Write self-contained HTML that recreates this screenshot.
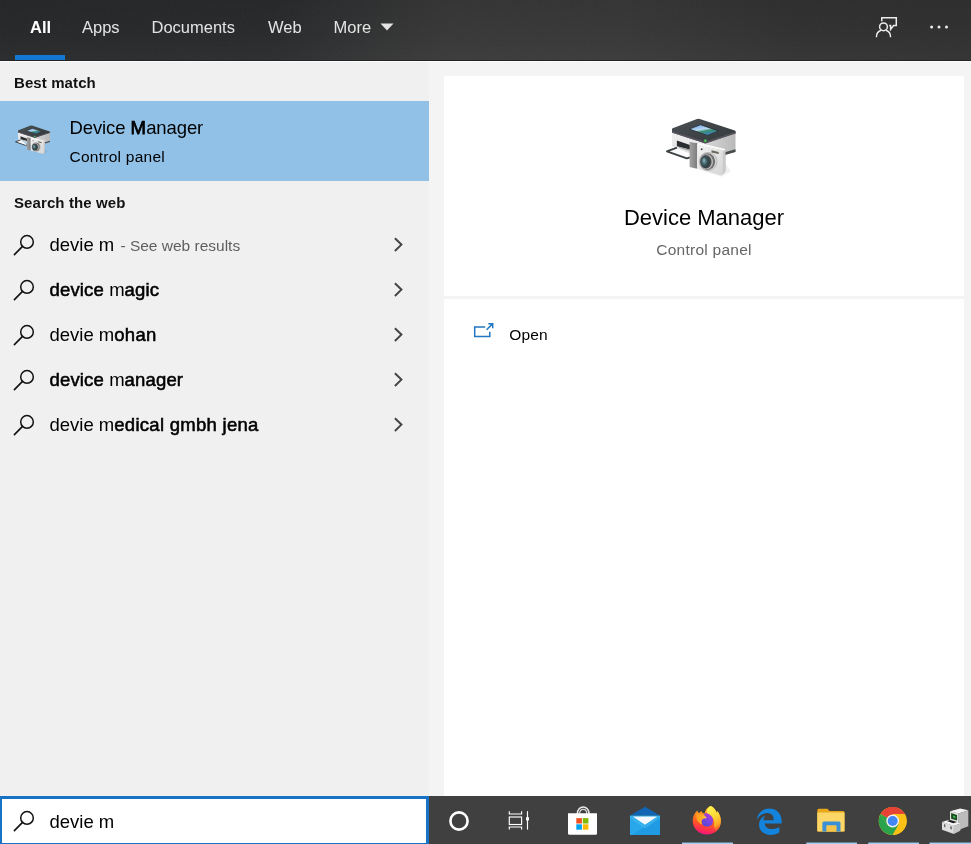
<!DOCTYPE html>
<html lang="en">
<head>
<meta charset="utf-8">
<title>Search</title>
<style>
*{box-sizing:border-box;margin:0;padding:0}
html,body{width:971px;height:844px;overflow:hidden;background:#f4f4f4;font-family:"Liberation Sans",sans-serif;color:#000}
.abs{position:absolute}
#top{left:0;top:0;width:971px;height:61px;background:linear-gradient(90deg,#252628 0%,#27282a 28%,#2e2f30 36%,#363636 46%,#363636 65%,#2f2f2f 82%,#2e2e2e 100%);border-bottom:1px solid #232323}
#top .tab{position:absolute;top:0;height:55px;line-height:55px;font-size:16.5px;color:#e4e4e4;white-space:nowrap}
#top .tab.sel{color:#fff;font-weight:bold}
#uline{left:15px;top:55px;width:50px;height:5px;background:#1278d3}
#left{left:0;top:61px;width:429px;height:735px;background:#f0f0f0}
.hdr{position:absolute;left:14px;font-weight:bold;font-size:15px;letter-spacing:0.1px;color:#111;white-space:nowrap}
#sel{left:0;top:101px;width:429px;height:80px;background:#91c1e7}
.row{position:absolute;left:0;width:429px;height:45px}
.row .t{position:absolute;left:49.5px;top:0px;line-height:45px;font-size:18.5px;white-space:nowrap;color:#000}
.row .t b{font-weight:normal;-webkit-text-stroke:0.55px #000;letter-spacing:0.28px}
.row .t b.n{letter-spacing:0.17px}
.row .t .g{font-size:15.5px;color:#5f5f5f;margin-left:1px}
.row svg.mag{position:absolute;left:12px;top:11px}
.row svg.chev{position:absolute;left:391px;top:13.8px}
#card{left:444px;top:76px;width:520px;height:720px;background:#fff}
#divider{left:444px;top:296px;width:520px;height:3px;background:#f4f4f4}
#task{left:0;top:796px;width:971px;height:48px;background:#404040}
#sbox{left:0;top:796px;width:429px;height:48px;background:#fff;border:3px solid #1873c6;border-left-width:2px;border-bottom-width:1px}
</style>
</head>
<body>
<div id="root" style="position:absolute;left:0;top:0;width:971px;height:844px;will-change:transform">
<div id="top" class="abs">
  <div class="abs" style="left:0;top:0;width:971px;height:60px;background:linear-gradient(180deg,rgba(0,0,0,.07) 0%,rgba(0,0,0,0) 55%,rgba(255,255,255,.025) 100%)"></div>
  <svg class="abs" style="left:0;top:0;opacity:.05" width="971" height="60"><filter id="nz"><feTurbulence type="fractalNoise" baseFrequency="0.9" numOctaves="2" seed="3"/><feColorMatrix type="saturate" values="0"/></filter><rect width="971" height="60" filter="url(#nz)"/></svg>
  <div class="tab sel" style="left:30px">All</div>
  <div class="tab" style="left:82px">Apps</div>
  <div class="tab" style="left:151.5px">Documents</div>
  <div class="tab" style="left:268px">Web</div>
  <div class="tab" style="left:333.5px">More</div>
  <svg class="abs" style="left:380px;top:23px" width="14" height="8" viewBox="0 0 14 8"><path d="M0.5 0.5h13L7 7.5z" fill="#e4e4e4"/></svg>
  <svg class="abs" style="left:870px;top:12px" width="32" height="30" viewBox="870 12 32 30" fill="none" stroke="#ececec" stroke-width="1.5">
    <path d="M881.8 21.3V17.8H896.3V25.6H893.6L890.6 29.4V25.6H889.2"/>
    <circle cx="883.5" cy="26.8" r="3.9"/>
    <path d="M876.4 37.2C876.4 33.6 878.4 31.2 881 30.3M890.6 37.2C890.6 33.6 888.6 31.2 886 30.3"/>
  </svg>
  <svg class="abs" style="left:925px;top:20px" width="28" height="14" viewBox="925 20 28 14" fill="#ececec"><circle cx="931.6" cy="26.9" r="1.5"/><circle cx="939" cy="26.9" r="1.5"/><circle cx="946.5" cy="26.9" r="1.5"/></svg>
</div>
<div id="uline" class="abs"></div>

<div id="left" class="abs"></div>
<div class="abs" style="left:0;top:61px;width:971px;height:1px;background:#fcfcfc"></div>
<div class="hdr" style="top:74px">Best match</div>
<div id="sel" class="abs"></div>
<div class="abs" style="left:69.5px;top:117px;font-size:18.5px;letter-spacing:-0.1px;white-space:nowrap">Device <b style="font-weight:normal;-webkit-text-stroke:0.75px #000;letter-spacing:0.2px">M</b>anager</div>
<div class="abs" style="left:69.5px;top:148px;font-size:15.5px;letter-spacing:0.25px;white-space:nowrap">Control panel</div>
<div class="hdr" style="top:194px">Search the web</div>

<div class="row" style="top:222px"><svg class="mag" width="26" height="24" viewBox="0 0 26 24"><circle cx="15" cy="8.9" r="6.3" fill="none" stroke="#111" stroke-width="1.5"/><path d="M10.5 13.4L2.4 21.6" stroke="#111" stroke-width="1.6" stroke-linecap="round"/></svg><svg class="chev" width="12" height="18" viewBox="0 0 12 18"><path d="M3.9 2.2L10.4 8.6L3.9 15" fill="none" stroke="#444" stroke-width="2"/></svg><div class="t">devie m <span class="g">- See web results</span></div></div>
<div class="row" style="top:267px"><svg class="mag" width="26" height="24" viewBox="0 0 26 24"><circle cx="15" cy="8.9" r="6.3" fill="none" stroke="#111" stroke-width="1.5"/><path d="M10.5 13.4L2.4 21.6" stroke="#111" stroke-width="1.6" stroke-linecap="round"/></svg><svg class="chev" width="12" height="18" viewBox="0 0 12 18"><path d="M3.9 2.2L10.4 8.6L3.9 15" fill="none" stroke="#444" stroke-width="2"/></svg><div class="t"><b class="n">device</b> m<b class="n">agic</b></div></div>
<div class="row" style="top:312px"><svg class="mag" width="26" height="24" viewBox="0 0 26 24"><circle cx="15" cy="8.9" r="6.3" fill="none" stroke="#111" stroke-width="1.5"/><path d="M10.5 13.4L2.4 21.6" stroke="#111" stroke-width="1.6" stroke-linecap="round"/></svg><svg class="chev" width="12" height="18" viewBox="0 0 12 18"><path d="M3.9 2.2L10.4 8.6L3.9 15" fill="none" stroke="#444" stroke-width="2"/></svg><div class="t">devie m<b>ohan</b></div></div>
<div class="row" style="top:357px"><svg class="mag" width="26" height="24" viewBox="0 0 26 24"><circle cx="15" cy="8.9" r="6.3" fill="none" stroke="#111" stroke-width="1.5"/><path d="M10.5 13.4L2.4 21.6" stroke="#111" stroke-width="1.6" stroke-linecap="round"/></svg><svg class="chev" width="12" height="18" viewBox="0 0 12 18"><path d="M3.9 2.2L10.4 8.6L3.9 15" fill="none" stroke="#444" stroke-width="2"/></svg><div class="t"><b class="n">device</b> m<b class="n">anager</b></div></div>
<div class="row" style="top:402px"><svg class="mag" width="26" height="24" viewBox="0 0 26 24"><circle cx="15" cy="8.9" r="6.3" fill="none" stroke="#111" stroke-width="1.5"/><path d="M10.5 13.4L2.4 21.6" stroke="#111" stroke-width="1.6" stroke-linecap="round"/></svg><svg class="chev" width="12" height="18" viewBox="0 0 12 18"><path d="M3.9 2.2L10.4 8.6L3.9 15" fill="none" stroke="#444" stroke-width="2"/></svg><div class="t">devie m<b>edical gmbh jena</b></div></div>

<div id="card" class="abs"></div>
<div id="divider" class="abs"></div>
<div class="abs" style="left:444px;top:205px;width:520px;text-align:center;font-size:22px;white-space:nowrap">Device Manager</div>
<div class="abs" style="left:444px;top:241px;width:520px;text-align:center;font-size:15.5px;letter-spacing:0.25px;color:#666;white-space:nowrap">Control panel</div>
<div class="abs" style="left:509.2px;top:326px;font-size:15.5px;letter-spacing:0.2px;white-space:nowrap">Open</div>

<svg class="abs" style="left:470px;top:318px" width="28" height="24" viewBox="470 318 28 24" fill="none" stroke="#2177c2" stroke-width="1.5"><path d="M485.2 326.9H474.7V336.5H489.8V331.8"/><path d="M486.6 329.8L492.5 323.9M488.3 323.8H492.7V328.2"/></svg>
<svg width="0" height="0" style="position:absolute">
 <defs>
  <linearGradient id="dmTop" x1="0" y1="0" x2="1" y2="1"><stop offset="0" stop-color="#4a5053"/><stop offset="1" stop-color="#33383b"/></linearGradient>
  <linearGradient id="dmL" x1="0" y1="0" x2="0" y2="1"><stop offset="0" stop-color="#f2f2f2"/><stop offset="1" stop-color="#d9d9d9"/></linearGradient>
  <linearGradient id="dmR" x1="0" y1="0" x2="1" y2="0"><stop offset="0" stop-color="#d6d6d6"/><stop offset="1" stop-color="#b9b9b9"/></linearGradient>
  <linearGradient id="dmScr" x1="0.2" y1="0" x2="0.7" y2="1"><stop offset="0" stop-color="#6fa6e8"/><stop offset="0.45" stop-color="#b9d9f3"/><stop offset="0.6" stop-color="#3d8f72"/><stop offset="1" stop-color="#3f7fd0"/></linearGradient>
  <linearGradient id="dmCam" x1="0" y1="0" x2="1" y2="1"><stop offset="0" stop-color="#f3f3f3"/><stop offset="1" stop-color="#d4d4d4"/></linearGradient>
  <linearGradient id="dmGrip" x1="0" y1="0" x2="1" y2="0"><stop offset="0" stop-color="#a3a3a3"/><stop offset="1" stop-color="#7d7d7d"/></linearGradient>
  <radialGradient id="dmGlass" cx="0.4" cy="0.45" r="0.6"><stop offset="0" stop-color="#6f9aa0"/><stop offset="0.5" stop-color="#3c5a60"/><stop offset="1" stop-color="#2a3537"/></radialGradient>
  <symbol id="dm" viewBox="660 110 85 75">
   <!-- shadow -->
   <path d="M700 170L721.500 176.800L731 171.500L726 164Z" fill="#000" opacity=".06"/>
   <!-- right face -->
   <path d="M705.300 141L735.500 132V151.700L725.700 154.600L705.300 160Z" fill="url(#dmR)"/>
   <path d="M724 152.500L735.500 149.300V151.900L724 155.200Z" fill="#474b4d"/>
   <!-- left face -->
   <path d="M672 131.500L705.300 142.500V160L672 146.200Z" fill="url(#dmL)"/>
   <!-- slot -->
   <path d="M676.900 140.400L690 145V149.600L676.900 146.200Z" fill="#2b2e30"/>
   <path d="M679 146.900L690 149.700V151L679 147.800Z" fill="#8f9496"/>
   <!-- tray -->
   <path d="M677 147.700L666.900 151.300L686.800 158.400L690 157.300" fill="#fbfbfb" stroke="#3b4043" stroke-width="1.900" stroke-linejoin="round"/>
   <!-- top slab -->
   <path d="M672.600 128.200L697 119.100Q698.400 118.600 699.800 119.100L734.800 130.600Q735.800 131.100 735.700 132.200V133.300L705.300 143.400L672 132.600V129.400Q672 128.500 672.600 128.200Z" fill="url(#dmTop)"/>
   <path d="M672 131L705.300 141.600L735.700 131.600V133.400L705.300 143.600L672 132.800Z" fill="#5b5560" opacity=".8"/>
   <!-- screen -->
   <path d="M689.300 129.100L700.400 124.700L718.600 130.900L707.500 135.400Z" fill="url(#dmScr)" stroke="#2a2e31" stroke-width=".8"/>
   <!-- led -->
   <rect x="704.200" y="139.400" width="2.300" height="2.300" rx=".6" fill="#46e056"/>
   <!-- camera grip -->
   <path d="M689.600 141.700L697.200 143V168.700L689.600 166.900Z" fill="url(#dmGrip)"/>
   <path d="M689.600 141.700L691 140.600L699 141.500L697.200 143Z" fill="#ededed"/>
   <!-- camera top -->
   <path d="M697.200 145L698.600 142.800L725.400 149L724.600 150.800Z" fill="#fafafa"/>
   <!-- camera body -->
   <path d="M697.200 145L724.800 150.700V172.400L721.400 175.400L697.200 168.700Z" fill="url(#dmCam)"/>
   <path d="M724.800 150.700L725.600 149V170.500L724.800 172.400Z" fill="#b7b7b7"/>
   <path d="M721.400 175.400L724.800 172.400V150.700L722.800 151.200V173Z" fill="#c9c9c9"/>
   <!-- flash + label -->
   <circle cx="701.700" cy="149.200" r="1" fill="#4a4a4a"/>
   <path d="M711.500 150.300L718.700 151.900V154L711.500 152.400Z" fill="#6b675c"/>
   <!-- lens -->
   <ellipse cx="708.100" cy="161.500" rx="8.900" ry="9.100" fill="#d9d9d9" stroke="#9d9d9d" stroke-width=".6"/>
   <ellipse cx="707.500" cy="161.600" rx="7.700" ry="8.300" fill="#6f6f6f"/>
   <ellipse cx="706.500" cy="161.700" rx="6.500" ry="7.400" fill="#bdbdbd"/>
   <ellipse cx="705.900" cy="161.800" rx="5.700" ry="6.700" fill="#4a4e4f"/>
   <ellipse cx="705.200" cy="162" rx="4.600" ry="5.800" fill="url(#dmGlass)"/>
   <ellipse cx="704" cy="160" rx="1.400" ry="1.900" fill="#9dc0c4" opacity=".55"/>
  </symbol>
 </defs>
</svg>
<svg class="abs" style="left:660px;top:110px" width="85" height="75"><use href="#dm"/></svg>
<svg class="abs" style="left:11.900px;top:120.900px" width="42.800" height="37.800"><use href="#dm"/></svg>
<div id="task" class="abs"></div>
<svg class="abs" style="left:429px;top:796px" width="542" height="48" viewBox="429 796 542 48">
  <!-- cortana -->
  <circle cx="459" cy="821" r="8.6" fill="none" stroke="#fff" stroke-width="2.6"/>
  <!-- task view -->
  <g fill="none" stroke="#fff" stroke-width="1.150">
    <rect x="509.300" y="817" width="12.300" height="7.500"/>
    <path d="M509.300 811.200V814H521.600V811.200M509.300 829.600V827H521.600V829.600"/>
    <path d="M527.500 811.200V829.600"/>
  </g>
  <rect x="526" y="817.2" width="3" height="3.2" fill="#fff"/>
  <!-- store -->
  <path d="M577.3 814C577.3 804.500 589.100 804.500 589.100 814" fill="none" stroke="#e9e9e9" stroke-width="1.5"/>
  <path d="M579.6 814C579.6 807.800 586.800 807.800 586.800 814" fill="none" stroke="#d6d6d6" stroke-width="1.2"/>
  <path d="M568 813.300H597V833.200Q597 834.700 595.500 834.700H569.500Q568 834.700 568 833.200Z" fill="#fff"/>
  <rect x="576.3" y="818.100" width="5.600" height="5.400" fill="#f25022"/>
  <rect x="582.800" y="818.100" width="5.600" height="5.400" fill="#7fba00"/>
  <rect x="576.3" y="824.300" width="5.600" height="5.400" fill="#00a4ef"/>
  <rect x="582.800" y="824.300" width="5.600" height="5.400" fill="#ffb900"/>
  <!-- mail -->
  <path d="M630 815.600L645.200 806.800L660 815.600Z" fill="#0f64b4"/>
  <rect x="630" y="815.500" width="30" height="19.500" fill="#28a8ea"/>
  <path d="M630 835L660 835L660 833L637 819Z" fill="#1c97e0" opacity="0"/>
  <path d="M645 825L660 835H630Z" fill="#2aa9ea" opacity="0"/>
  <path d="M660 817V835H632Z" fill="#1890dc" opacity=".55"/>
  <path d="M632.600 816.400H657.400L645 824.800Z" fill="#f4f8fc"/>
  <path d="M630 815.500L645 826L660 815.500V818L645 828.500L630 818Z" fill="#4fc0f5" opacity=".5"/>
  <!-- firefox -->
  <defs>
    <linearGradient id="ffg" x1="0.6" y1="0" x2="0.4" y2="1"><stop offset="0" stop-color="#ffc02e"/><stop offset="0.35" stop-color="#ff8a1c"/><stop offset="0.62" stop-color="#ff5527"/><stop offset="0.85" stop-color="#ff2b52"/><stop offset="1" stop-color="#ee1380"/></linearGradient>
    <linearGradient id="ffp" x1="0.7" y1="0" x2="0.2" y2="1"><stop offset="0" stop-color="#b53ad6"/><stop offset="0.5" stop-color="#7f45de"/><stop offset="1" stop-color="#4d48d8"/></linearGradient>
    <linearGradient id="ffy" x1="0.3" y1="0" x2="0.6" y2="1"><stop offset="0" stop-color="#fff450"/><stop offset="0.45" stop-color="#ffd735"/><stop offset="0.8" stop-color="#ffa826"/><stop offset="1" stop-color="#ff7d22" stop-opacity="0.3"/></linearGradient>
    <linearGradient id="ffh" x1="0" y1="0.3" x2="1" y2="0.6"><stop offset="0" stop-color="#ff9a1e"/><stop offset="0.7" stop-color="#ffb42c"/><stop offset="1" stop-color="#ffe25a"/></linearGradient>
  </defs>
  <path d="M710.600 806C713.500 806.800 715.800 810 716.800 812.700C717.200 812.200 717.500 811.600 717.400 811C720 814.500 721 818.500 720.800 822C720.500 829 714.500 834.600 707 834.600C699 834.600 692.700 828.500 692.700 821C692.700 816.500 694.500 813 697.400 810.500C697.600 811.500 698.200 812.600 699 813.300C699.600 812.300 700.600 811.400 701.400 811C701.800 812.500 703 813.500 704.800 813.500C704.800 810.500 707.500 807 710.600 806Z" fill="url(#ffg)"/>
  <path d="M707 813.200C711 813.200 713 816.500 713 820.500C713 824.500 710.500 826.600 707.200 826.600C704 826.600 701.600 824.500 701.600 821.500C701.600 818.500 703.500 815 704.800 813.500C705.500 813.300 706.300 813.200 707 813.200Z" fill="url(#ffp)"/>
  <path d="M710.600 806C713.500 806.800 715.800 810 716.800 812.700C717.200 812.200 717.500 811.600 717.400 811C720 814.500 721 818.500 720.800 822C720.600 826 719 829 716.500 831.200C715 829.500 714 827.500 714 825.500C715 821 713.300 816 707.500 813.200C705.600 812 707.500 807.500 710.600 806Z" fill="url(#ffy)"/>
  <path d="M696.800 813C698.500 813.800 700.500 814.200 702.500 814.400C704.500 815 706 816.500 706.700 818.200C704.500 818 702.800 818.600 701.800 820C701.200 821.500 701.400 823 702 824.300C699 823.500 696.800 820.500 696.300 817C696.200 815.500 696.400 814 696.800 813Z" fill="url(#ffh)"/>
  <!-- edge -->
  <g transform="translate(753.200 805.900) scale(1.340 1.300)"><path d="M2.740 10.810C3.830 -1.360 22.500 -1.360 21.200 13.560H8.610C8.610 17.850 14.420 19.210 19.540 16.310V20.530C11.280 25.380 2.740 20.320 4.630 12.400C5.200 10.220 7.030 8.270 9.080 7.460C8.950 7.560 7.730 8.680 7.730 11.010H15.220C15.220 11.010 15.970 5.490 10.180 5.490C6.730 5.640 4.130 8.040 2.740 10.810Z" fill="#1383dc"/></g>
  <!-- explorer -->
  <path d="M817.300 810.200Q817.300 808.700 818.800 808.700H827.500L829.500 811H843Q844.500 811 844.500 812.500V831.500H817.300Z" fill="#e9a81a"/>
  <path d="M817.300 812.500H844.500V830.300Q844.500 831.500 843.300 831.500H818.500Q817.300 831.500 817.300 830.300Z" fill="#fcd667"/>
  <path d="M822.400 831.500V823Q822.400 821.400 824 821.400H839Q840.500 821.400 840.500 823V831.500H836.300V825.600H826.600V831.500Z" fill="#3b8fd4"/>
  <rect x="826.600" y="825.600" width="9.700" height="5.900" fill="#f4c44a"/>
  <!-- chrome -->
  <g transform="translate(892.700 821)">
    <circle r="14" fill="#fbc116"/>
    <path d="M0 0L-12.124 -7A14 14 0 0 1 12.124 -7Z" fill="#e74335"/>
    <path d="M-12.124 -7A14 14 0 0 1 12.124 -7H0Z" fill="#e74335"/>
    <path d="M-12.124 -7A14 14 0 0 0 0 14L6.060 3.500L-6.060 3.500Z" fill="#2ba24c"/>
    <path d="M-12.124 -7L-6.060 3.500L0 0Z" fill="#2ba24c"/>
    <path d="M0 14A14 14 0 0 0 12.124 -7H0L6.060 3.500Z" fill="#fbc116"/>
    <circle r="6.400" fill="#f3f3f3"/>
    <circle r="5" fill="#4285f4"/>
  </g>
  <!-- device icon -->
  <path d="M950 811.200L960.200 808.600L968.300 810.200L958.600 813.600Z" fill="#f2f2f2"/>
  <path d="M958.600 813.600L968.300 810.200V827.100L960.200 830.200L958.600 829Z" fill="#bcbcbc"/>
  <path d="M960.500 829.300L968.300 826.300V827.600L960.500 830.600Z" fill="#3a3a3a"/>
  <path d="M950 811.200L958.600 813.600V824L950 821Z" fill="#e3e3e3"/>
  <path d="M951.100 813L957.100 814.900V820.600L951.100 818.800Z" fill="#19501f"/>
  <path d="M953 815.600L955.400 816.300V818.300L953 817.600Z" fill="#3fae4e"/>
  <path d="M942 821.900L948.200 820.100L960.200 823.500L953.900 825.900Z" fill="#f4f4f4"/>
  <path d="M946.800 821L950.300 819.900L957 821.900L953.300 823.200Z" fill="#1c1c1c"/>
  <path d="M942 821.900L953.900 825.800V833.900L942 829.700Z" fill="#dedede"/>
  <path d="M953.900 825.800L960.200 823.500V830.800L953.900 833.900Z" fill="#c6c6c6"/>
  <path d="M944 823.900L945.400 824.400V827.600L944 827.100Z" fill="#6a6a6a"/>
  <path d="M950.300 826.100L951.900 826.700V829.600L950.300 829Z" fill="#6a6a6a"/>
  <!-- running indicators -->
  <g fill="#a3d0f3"><rect x="682" y="842.550" width="51" height="1.450"/><rect x="806.300" y="842.550" width="50.700" height="1.450"/><rect x="868.300" y="842.550" width="50.700" height="1.450"/><rect x="929.500" y="842.550" width="41.500" height="1.450"/></g>
</svg>
<div id="sbox" class="abs"></div>
<svg class="abs" style="left:12.2px;top:808.9px" width="26" height="24" viewBox="0 0 26 24"><circle cx="15" cy="8.9" r="6.3" fill="none" stroke="#111" stroke-width="1.5"/><path d="M10.5 13.4L2.4 21.6" stroke="#111" stroke-width="1.6" stroke-linecap="round"/></svg>
<div class="abs" style="left:49.5px;top:811px;font-size:18.5px;white-space:nowrap">devie m</div>
</div>
</body>
</html>
